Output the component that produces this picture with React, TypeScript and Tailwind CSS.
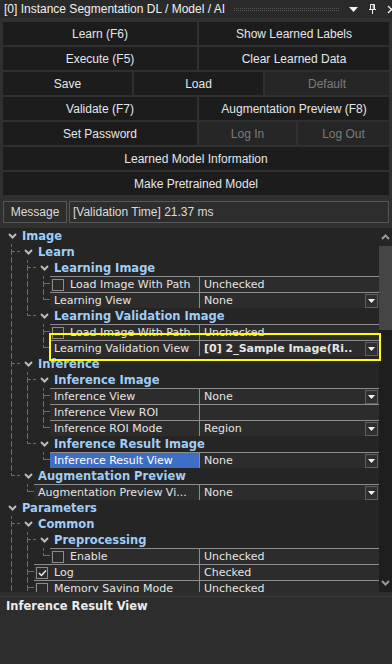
import React from 'react'

type Row = {
  kind: 'cat' | 'prop'
  depth: number
  label: string
  value?: string
  check?: boolean
  checked?: boolean
  drop?: boolean
  selected?: boolean
  boldValue?: boolean
}

const rows: Row[] = [
  { kind: 'cat', depth: 0, label: 'Image' },
  { kind: 'cat', depth: 1, label: 'Learn' },
  { kind: 'cat', depth: 2, label: 'Learning Image' },
  { kind: 'prop', depth: 3, label: 'Load Image With Path', value: 'Unchecked', check: true },
  { kind: 'prop', depth: 3, label: 'Learning View', value: 'None', drop: true },
  { kind: 'cat', depth: 2, label: 'Learning Validation Image' },
  { kind: 'prop', depth: 3, label: 'Load Image With Path', value: 'Unchecked', check: true },
  { kind: 'prop', depth: 3, label: 'Learning Validation View', value: '[0] 2_Sample Image(Ri..', drop: true, boldValue: true },
  { kind: 'cat', depth: 1, label: 'Inference' },
  { kind: 'cat', depth: 2, label: 'Inference Image' },
  { kind: 'prop', depth: 3, label: 'Inference View', value: 'None', drop: true },
  { kind: 'prop', depth: 3, label: 'Inference View ROI', value: '' },
  { kind: 'prop', depth: 3, label: 'Inference ROI Mode', value: 'Region', drop: true },
  { kind: 'cat', depth: 2, label: 'Inference Result Image' },
  { kind: 'prop', depth: 3, label: 'Inference Result View', value: 'None', drop: true, selected: true },
  { kind: 'cat', depth: 1, label: 'Augmentation Preview' },
  { kind: 'prop', depth: 2, label: 'Augmentation Preview Vi...', value: 'None', drop: true },
  { kind: 'cat', depth: 0, label: 'Parameters' },
  { kind: 'cat', depth: 1, label: 'Common' },
  { kind: 'cat', depth: 2, label: 'Preprocessing' },
  { kind: 'prop', depth: 3, label: 'Enable', value: 'Unchecked', check: true },
  { kind: 'prop', depth: 2, label: 'Log', value: 'Checked', check: true, checked: true },
  { kind: 'prop', depth: 2, label: 'Memory Saving Mode', value: 'Unchecked', check: true },
]

// true when another node at `depth` follows before the branch closes (list end = tree keeps going)
function hasLater(i: number, depth: number) {
  for (let j = i + 1; j < rows.length; j++) {
    if (rows[j].depth < depth) return false
    if (rows[j].depth === depth) return true
  }
  return true
}

const dash = 'border-dashed border-[#6c6c6c]'

function Guide({ line, full, branch, narrow }: { line: boolean; full: boolean; branch: boolean; narrow?: boolean }) {
  return (
    <div className={`flex h-4 shrink-0 ${narrow ? 'w-[14px]' : 'w-4'}`}>
      <div className="flex w-2 flex-col">
        <div className={line ? `h-2 border-r ${dash}` : 'h-2'} />
        <div className={line && full ? `h-2 border-r ${dash}` : 'h-2'} />
      </div>
      <div className="flex flex-1 flex-col">
        <div className={branch ? `h-2 border-b ${dash}` : 'h-2'} />
      </div>
    </div>
  )
}

function Chevron({ up, color = '#bdbdbd' }: { up?: boolean; color?: string }) {
  return (
    <svg width="9" height="6" viewBox="0 0 9 6">
      <path d={up ? 'M1 5 L4.5 1.5 L8 5' : 'M1 1 L4.5 4.5 L8 1'} fill="none" stroke={color} strokeWidth="2" />
    </svg>
  )
}

function TreeRow({ row, i }: { row: Row; i: number }) {
  const guides = []
  for (let k = 0; k < row.depth; k++) {
    const cont = hasLater(i, k + 1)
    const last = k === row.depth - 1
    guides.push(
      <Guide key={k} line={last || cont} full={cont} branch={last} narrow={last && row.kind === 'prop'} />,
    )
  }
  return (
    <div className="flex h-4">
      <div className="w-1 shrink-0" />
      {guides}
      {row.kind === 'cat' ? (
        <>
          <div className="flex h-4 w-4 shrink-0 items-center justify-center">
            <Chevron />
          </div>
          <span className="ml-[2px] whitespace-nowrap text-[11.5px] font-bold leading-4 text-[#9fcdf5]">{row.label}</span>
        </>
      ) : (
        <div className="flex min-w-0 flex-1 border-t border-[#8c8c8c] bg-[#2c2c2c]">
          <div
            className={`flex min-w-0 flex-1 items-center overflow-hidden whitespace-nowrap ${
              row.selected ? 'bg-[#3f6fc4] text-white' : 'text-[#e4e4e4]'
            }`}
          >
            {row.check ? (
              <>
                <div className="ml-[2px] flex h-[12px] w-[12px] shrink-0 items-center justify-center border border-[#8c8c8c] bg-[#2a2a2a]">
                  {row.checked && (
                    <svg width="9" height="8" viewBox="0 0 9 8">
                      <path d="M1 4 L3.5 6.5 L8 1.5" fill="none" stroke="#f0f0f0" strokeWidth="1.4" />
                    </svg>
                  )}
                </div>
                <span className="ml-[6px] text-[11px] leading-[15px]">{row.label}</span>
              </>
            ) : (
              <span className="pl-1 text-[11px] leading-[15px]">{row.label}</span>
            )}
          </div>
          <div className="flex w-[180px] shrink-0 items-center border-l border-[#8c8c8c] text-[#e4e4e4]">
            <span className={`flex-1 overflow-hidden whitespace-nowrap pl-[4px] leading-[15px] ${row.boldValue ? 'text-[11px] font-bold' : 'text-[11px]'}`}>
              {row.value}
            </span>
            {row.drop && (
              <div className="mr-[1px] flex h-[14px] w-[13px] shrink-0 items-center justify-center border border-[#5e5e5e] bg-[#303030]">
                <svg width="7" height="4" viewBox="0 0 7 4">
                  <path d="M0 0 H7 L3.5 4 Z" fill="#f2f2f2" />
                </svg>
              </div>
            )}
          </div>
        </div>
      )}
    </div>
  )
}

function Btn({ label, w, disabled }: { label: string; w?: string; disabled?: boolean }) {
  return (
    <div
      className={`flex h-[23px] shrink-0 items-center justify-center whitespace-nowrap text-[12px] ${w ?? 'flex-1'} ${
        disabled ? 'bg-[#262626] text-[#7b7b7b]' : 'bg-[#1c1c1c] text-[#e4e6ea]'
      }`}
    >
      {label}
    </div>
  )
}

export default function App() {
  return (
    <div className="flex h-[664px] w-[392px] flex-col overflow-hidden bg-[#303030] font-['Liberation_Sans',sans-serif]">
      {/* title bar */}
      <div className="flex h-[18px] shrink-0 items-center overflow-hidden bg-[#2a2a2a] pl-[4px]">
        <span className="whitespace-nowrap text-[12px] text-[#f0f0f0]">[0] Instance Segmentation DL / Model / AI</span>
        <div className="ml-[9px] h-[3px] flex-1 border-y border-dotted border-[#555]" />
        <svg className="ml-[10px] shrink-0" width="9" height="5" viewBox="0 0 9 5">
          <path d="M0 0 H9 L4.5 5 Z" fill="#f0f0f0" />
        </svg>
        <svg className="ml-[11px] shrink-0" width="7" height="10" viewBox="0 0 7 10">
          <path d="M1.5 0.5 H5.5 V5.5 H1.5 Z M0 5.5 H7 M3.5 5.5 V10" fill="none" stroke="#f0f0f0" strokeWidth="1" />
          <path d="M4.2 1 V5" stroke="#f0f0f0" strokeWidth="1" />
        </svg>
        <svg className="ml-[11px] mr-[-4px] shrink-0" width="9" height="9" viewBox="0 0 9 9">
          <path d="M1 1 L8 8 M8 1 L1 8" stroke="#f0f0f0" strokeWidth="1.3" />
        </svg>
      </div>

      {/* command buttons */}
      <div className="flex shrink-0 flex-col gap-[2px] px-[3px] pt-[4px]">
        <div className="flex gap-[2px]">
          <Btn label="Learn (F6)" w="w-[194px]" />
          <Btn label="Show Learned Labels" />
        </div>
        <div className="flex gap-[2px]">
          <Btn label="Execute (F5)" w="w-[194px]" />
          <Btn label="Clear Learned Data" />
        </div>
        <div className="flex gap-[2px]">
          <Btn label="Save" w="w-[129px]" />
          <Btn label="Load" w="w-[129px]" />
          <Btn label="Default" disabled />
        </div>
        <div className="flex gap-[2px]">
          <Btn label="Validate (F7)" w="w-[194px]" />
          <Btn label="Augmentation Preview (F8)" />
        </div>
        <div className="flex gap-[2px]">
          <Btn label="Set Password" w="w-[194px]" />
          <Btn label="Log In" w="w-[97px]" disabled />
          <Btn label="Log Out" disabled />
        </div>
        <Btn label="Learned Model Information" w="w-full" />
        <Btn label="Make Pretrained Model" w="w-full" />
      </div>

      {/* message */}
      <div className="mt-[6px] flex h-[22px] shrink-0 gap-[2px] px-[3px] text-[12px] text-[#dcdcdc]">
        <div className="flex w-[64px] items-center justify-center border border-[#575757] bg-[#2d2d2d]">Message</div>
        <div className="flex flex-1 items-center border border-[#575757] bg-[#2d2d2d] pl-[3px]">[Validation Time] 21.37 ms</div>
      </div>

      {/* property tree */}
      <div className="relative mt-[5px] flex h-[364px] shrink-0 bg-[#252526] font-['DejaVu_Sans',sans-serif]">
        <div className="min-w-0 flex-1 overflow-hidden">
          {rows.map((r, i) => (
            <TreeRow key={i} row={r} i={i} />
          ))}
        </div>
        <div className="flex w-[13px] shrink-0 flex-col bg-[#1e1e1e]">
          <div className="flex h-[18px] items-center justify-center bg-[#252526]">
            <Chevron up color="#9a9a9a" />
          </div>
          <div className="h-[84px] bg-[#454545]" />
          <div className="flex-1" />
          <div className="flex h-[18px] items-center justify-center">
            <Chevron color="#9a9a9a" />
          </div>
        </div>
        <div className="absolute left-[49px] top-[105px] h-[28px] w-[332px] border-2 border-[#ffff00]" />
      </div>

      {/* description */}
      <div className="h-[4px] shrink-0 bg-[#2d2d2d]" />
      <div className="flex-1 border-t border-[#3a3a3a] bg-[#2d2d2d] px-[6px] pt-[2px] font-['DejaVu_Sans',sans-serif] text-[11.5px] font-bold leading-[14px] text-[#ececec]">
        Inference Result View
      </div>
    </div>
  )
}
